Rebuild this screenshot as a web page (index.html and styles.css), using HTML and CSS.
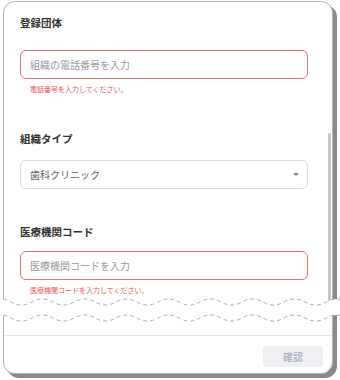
FILE: index.html
```html
<!DOCTYPE html>
<html lang="ja">
<head>
    <meta charset="UTF-8">
    <meta name="viewport" content="width=device-width, initial-scale=1.0">
    <title>登録団体</title>
    <link rel="stylesheet" href="styles.css">
</head>
<body>
    <div class="page">
        <div class="dialog">
            <div class="dialog-body">
                <h2 class="section-title">登録団体</h2>
                <div class="field field-first">
                    <input class="text-input is-invalid" type="text" placeholder="組織の電話番号を入力">
                    <p class="field-error">電話番号を入力してください。</p>
                </div>

                <div class="field">
                    <label class="field-label">組織タイプ</label>
                    <div class="select">
                        <span class="select-value">歯科クリニック</span>
                        <span class="select-caret"></span>
                    </div>
                </div>

                <div class="field field-code">
                    <label class="field-label">医療機関コード</label>
                    <input class="text-input is-invalid" type="text" placeholder="医療機関コードを入力">
                    <p class="field-error">医療機関コードを入力してください。</p>
                </div>
            </div>

            <div class="dialog-footer">
                <button class="btn-confirm" disabled>確認</button>
            </div>

            <div class="scroll-thumb"></div>
        </div>

        <!-- torn edge: the dialog is cut here -->
        <svg class="tear" width="340" height="28" viewBox="0 0 340 28">
            <path class="tear-fill" d="M-10 6 q10.5 -6 21 0 t21 0 t21 0 t21 0 t21 0 t21 0 t21 0 t21 0 t21 0 t21 0 t21 0 t21 0 t21 0 t21 0 t21 0 t21 0 t21 0 t21 0 L368 22 q-10.5 6 -21 0 t-21 0 t-21 0 t-21 0 t-21 0 t-21 0 t-21 0 t-21 0 t-21 0 t-21 0 t-21 0 t-21 0 t-21 0 t-21 0 t-21 0 t-21 0 t-21 0 t-21 0 Z"/>
            <path class="tear-line" d="M-10 6 q10.5 -6 21 0 t21 0 t21 0 t21 0 t21 0 t21 0 t21 0 t21 0 t21 0 t21 0 t21 0 t21 0 t21 0 t21 0 t21 0 t21 0 t21 0 t21 0"/>
            <path class="tear-line" d="M-10 22 q10.5 -6 21 0 t21 0 t21 0 t21 0 t21 0 t21 0 t21 0 t21 0 t21 0 t21 0 t21 0 t21 0 t21 0 t21 0 t21 0 t21 0 t21 0 t21 0"/>
        </svg>
    </div>
</body>
</html>
```

FILE: styles.css
```css
body {
    margin: 0;
    background: #fff;
    font-family: "Noto Sans CJK JP", "Noto Sans", sans-serif;
}
.page {
    position: relative;
    height: 380px;
    padding: 1px 0 0 3px;
    box-sizing: border-box;
}
.dialog {
    position: relative;
    width: 330px;
    height: 373px;
    box-sizing: border-box;
    display: flex;
    flex-direction: column;
    background: #fff;
    border: 1px solid #b4b4b4;
    border-radius: 12px;
    box-shadow: 4px 4px 0 #8a8a8a;
    overflow: hidden;
}
.dialog-body {
    height: 333px;
    padding: 13px 0 0 16px;
    box-sizing: border-box;
    overflow: hidden;
}
.section-title,
.field-label {
    display: block;
    margin: 0;
    font-size: 10.5px;
    line-height: 16px;
    font-weight: 700;
    color: #333;
}
.field {
    margin-top: 37px;
}
.field-first {
    margin-top: 19px;
}
.field-code {
    margin-top: 35px;
}
.text-input,
.select {
    display: flex;
    align-items: center;
    width: 288px;
    height: 29px;
    box-sizing: border-box;
    padding: 0 8px 0 9px;
    border: 1px solid #dcdcdc;
    border-radius: 6px;
    background: #fff;
    font-family: inherit;
    font-size: 10px;
    color: #666;
    outline: none;
}
.field-label + .select {
    margin-top: 13px;
}
.field-label + .text-input {
    margin-top: 11px;
}
.text-input::placeholder {
    color: #9a9a9a;
}
.is-invalid {
    border-color: #e27373;
}
.field-error {
    margin: 5px 0 0 10px;
    font-size: 7px;
    line-height: 10px;
    color: #e25a5a;
}
.select {
    justify-content: space-between;
}
.select-caret {
    width: 0;
    height: 0;
    border-left: 3px solid transparent;
    border-right: 3px solid transparent;
    border-top: 3px solid #8a8a8a;
}
.dialog-footer {
    display: flex;
    justify-content: flex-end;
    padding: 10px 9px 6px;
    border-top: 1px solid #e6e6e6;
}
.btn-confirm {
    width: 60px;
    height: 21px;
    padding: 0;
    border: none;
    border-radius: 4px;
    background: #eef0f4;
    color: #a9b0ba;
    font-family: inherit;
    font-size: 10px;
    font-weight: 500;
}
.scroll-thumb {
    position: absolute;
    top: 131px;
    right: 1px;
    width: 3px;
    height: 180px;
    border-radius: 2px;
    background: #c6c6c6;
}
.tear {
    position: absolute;
    top: 296px;
    left: 0;
}
.tear-fill {
    fill: #fff;
}
.tear-line {
    fill: none;
    stroke: #b0b0b0;
    stroke-width: 1;
    stroke-dasharray: 4 3;
}
```
